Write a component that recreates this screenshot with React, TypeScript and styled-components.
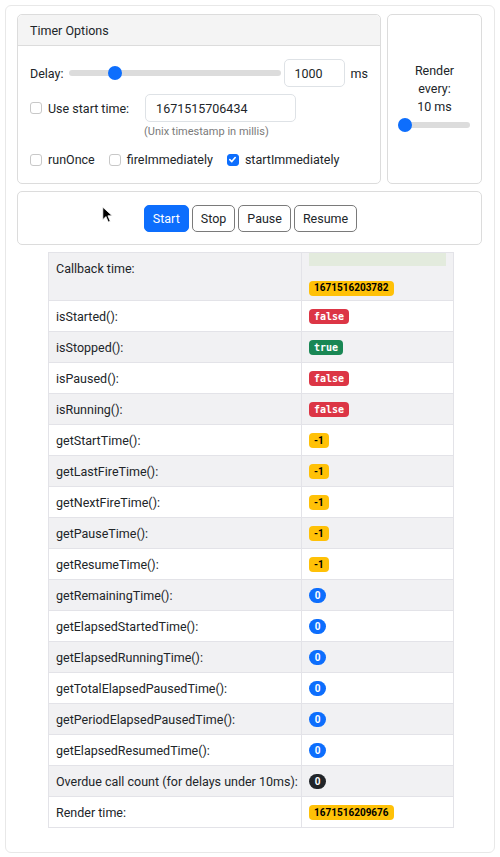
import React from "react";
import styled, { createGlobalStyle } from "styled-components";

const Global = createGlobalStyle`
  html, body { margin: 0; padding: 0; background: #fff; }
  body {
    font-family: Roboto, "Liberation Sans", sans-serif;
    font-size: 12.5px;
    color: #212529;
  }
  * { box-sizing: border-box; }
`;

const Page = styled.div`
  position: relative;
  width: 500px;
  height: 857px;
  padding: 5px 5px 4px 5px;
`;

const Outer = styled.div`
  border: 1px solid #e8e8e8;
  border-radius: 6px;
  padding: 8px 12px 22px 11px;
  display: flex;
  flex-direction: column;
  gap: 7px;
  height: 848px;
`;

const TopRow = styled.div`
  display: flex;
  gap: 6px;
`;

const Card = styled.div`
  border: 1px solid #dcdcdc;
  border-radius: 5px;
  background: #fff;
`;

const OptionsCard = styled(Card)`
  width: 364px;
  height: 170px;
  display: flex;
  flex-direction: column;
`;

const CardHeader = styled.div`
  height: 31px;
  background: #f4f4f4;
  border-bottom: 1px solid #dcdcdc;
  border-radius: 5px 5px 0 0;
  padding: 0 12px;
  display: flex;
  align-items: center;
`;

const CardBody = styled.div`
  padding: 13px 12px 0 12px;
  display: flex;
  flex-direction: column;
`;

const Row = styled.div<{ $mt?: number }>`
  display: flex;
  align-items: center;
  margin-top: ${(p) => p.$mt ?? 0}px;
`;

const Label = styled.span<{ $ml?: number }>`
  margin-left: ${(p) => p.$ml ?? 0}px;
  white-space: nowrap;
`;

const Range = styled.input.attrs({ type: "range" })<{ $w: number }>`
  -webkit-appearance: none;
  appearance: none;
  width: ${(p) => p.$w}px;
  height: 14px;
  margin: 0;
  background: transparent;
  &::-webkit-slider-runnable-track {
    height: 6px;
    background: #dcdcdc;
    border-radius: 3px;
  }
  &::-webkit-slider-thumb {
    -webkit-appearance: none;
    width: 14px;
    height: 14px;
    border-radius: 50%;
    background: #0d6efd;
    margin-top: -4px;
    border: none;
  }
`;

const TextInput = styled.input<{ $w: number }>`
  width: ${(p) => p.$w}px;
  height: 28px;
  border: 1px solid #dee2e6;
  border-radius: 5px;
  padding: 0 10px;
  font-family: inherit;
  font-size: 12.5px;
  color: #212529;
  background: #fff;
  outline: none;
`;

const Box = styled.span<{ $on?: boolean }>`
  width: 12px;
  height: 12px;
  border-radius: 3px;
  border: 1px solid ${(p) => (p.$on ? "#0d6efd" : "#c8c8c8")};
  background: ${(p) => (p.$on ? "#0d6efd" : "#fff")};
  display: inline-flex;
  align-items: center;
  justify-content: center;
  flex: none;
`;

const Check = styled.label<{ $ml?: number }>`
  display: inline-flex;
  align-items: center;
  gap: 6px;
  margin-left: ${(p) => p.$ml ?? 0}px;
`;

const Hint = styled.div`
  font-size: 11px;
  color: #7a7a7a;
  margin: 3px 0 0 114px;
`;

const RenderCard = styled(Card)`
  width: 96px;
  height: 170px;
  display: flex;
  flex-direction: column;
  align-items: center;
  padding-top: 47px;
  line-height: 18px;
  text-align: center;
`;

const RenderSlider = styled.div`
  margin-top: 2px;
`;

const ButtonCard = styled(Card)`
  height: 54px;
  display: flex;
  align-items: center;
  justify-content: center;
  gap: 3px;
  padding-left: 2px;
`;

const Button = styled.button<{ $primary?: boolean }>`
  height: 27px;
  padding: 0 8px;
  border-radius: 5px;
  font-family: inherit;
  font-size: 12.5px;
  border: 1px solid ${(p) => (p.$primary ? "#0d6efd" : "#7a7a7a")};
  background: ${(p) => (p.$primary ? "#0d6efd" : "#fff")};
  color: ${(p) => (p.$primary ? "#fff" : "#212529")};
`;

const Table = styled.table`
  margin-left: 31px;
  width: 406px;
  border-collapse: collapse;
  table-layout: fixed;
  font-size: 12.5px;
`;

const Tr = styled.tr<{ $striped?: boolean }>`
  background: ${(p) => (p.$striped ? "#f1f1f3" : "#fff")};
`;

const Td = styled.td<{ $top?: boolean }>`
  border: 1px solid #e3e3e8;
  height: 31px;
  padding: 0 7px;
  vertical-align: ${(p) => (p.$top ? "top" : "middle")};
  white-space: nowrap;
`;

const CallbackLabel = styled.div`
  padding-top: 8px;
  height: 47px;
`;

const CallbackValue = styled.div`
  display: flex;
  flex-direction: column;
  gap: 13px;
  height: 47px;
`;

const Flash = styled.div`
  height: 13px;
  width: 100%;
  background: #e3ebdd;
`;

type Tone = "danger" | "success" | "warning" | "primary" | "dark";

const toneBg: Record<Tone, string> = {
  danger: "#dc3545",
  success: "#198754",
  warning: "#ffc107",
  primary: "#0d6efd",
  dark: "#212529",
};

const Badge = styled.span<{ $tone: Tone; $mono?: boolean; $pill?: boolean }>`
  display: inline-flex;
  align-items: center;
  justify-content: center;
  height: 15px;
  min-width: ${(p) => (p.$pill ? 17 : 0)}px;
  padding: 0 5px;
  border-radius: ${(p) => (p.$pill ? "8px" : "4px")};
  background: ${(p) => toneBg[p.$tone]};
  color: ${(p) => (p.$tone === "warning" ? "#000" : "#fff")};
  font-weight: 700;
  font-size: 10px;
  font-family: ${(p) =>
    p.$mono
      ? '"DejaVu Sans Mono", "Liberation Mono", monospace'
      : 'Roboto, "Liberation Sans", sans-serif'};
  line-height: 1;
`;

const Cursor = styled.svg`
  position: absolute;
  left: 102px;
  top: 206px;
`;

const CheckMark = () => (
  <svg width="9" height="9" viewBox="0 0 10 10">
    <path d="M2 5.2 L4.2 7.3 L8 2.8" stroke="#fff" strokeWidth="1.8" fill="none" strokeLinecap="round" strokeLinejoin="round" />
  </svg>
);

type RowData = { label: string; value: string; tone: Tone; mono?: boolean; pill?: boolean };

const rows: RowData[] = [
  { label: "isStarted():", value: "false", tone: "danger", mono: true },
  { label: "isStopped():", value: "true", tone: "success", mono: true },
  { label: "isPaused():", value: "false", tone: "danger", mono: true },
  { label: "isRunning():", value: "false", tone: "danger", mono: true },
  { label: "getStartTime():", value: "-1", tone: "warning" },
  { label: "getLastFireTime():", value: "-1", tone: "warning" },
  { label: "getNextFireTime():", value: "-1", tone: "warning" },
  { label: "getPauseTime():", value: "-1", tone: "warning" },
  { label: "getResumeTime():", value: "-1", tone: "warning" },
  { label: "getRemainingTime():", value: "0", tone: "primary", pill: true },
  { label: "getElapsedStartedTime():", value: "0", tone: "primary", pill: true },
  { label: "getElapsedRunningTime():", value: "0", tone: "primary", pill: true },
  { label: "getTotalElapsedPausedTime():", value: "0", tone: "primary", pill: true },
  { label: "getPeriodElapsedPausedTime():", value: "0", tone: "primary", pill: true },
  { label: "getElapsedResumedTime():", value: "0", tone: "primary", pill: true },
  { label: "Overdue call count (for delays under 10ms):", value: "0", tone: "dark", pill: true },
  { label: "Render time:", value: "1671516209676", tone: "warning" },
];

export default function App() {
  return (
    <Page>
      <Global />
      <Outer>
        <TopRow>
          <OptionsCard>
            <CardHeader>Timer Options</CardHeader>
            <CardBody>
              <Row>
                <Label>Delay:</Label>
                <Range $w={212} min={0} max={5000} defaultValue={1000} style={{ marginLeft: 5 }} />
                <TextInput $w={61} defaultValue="1000" style={{ marginLeft: 3 }} />
                <Label $ml={6}>ms</Label>
              </Row>
              <Row $mt={7}>
                <Check>
                  <Box />
                  <span>Use start time:</span>
                </Check>
                <TextInput $w={151} defaultValue="1671515706434" style={{ marginLeft: 16 }} />
              </Row>
              <Hint>(Unix timestamp in millis)</Hint>
              <Row $mt={14}>
                <Check>
                  <Box />
                  <span>runOnce</span>
                </Check>
                <Check $ml={14}>
                  <Box />
                  <span>fireImmediately</span>
                </Check>
                <Check $ml={14}>
                  <Box $on>
                    <CheckMark />
                  </Box>
                  <span>startImmediately</span>
                </Check>
              </Row>
            </CardBody>
          </OptionsCard>
          <RenderCard>
            <div>Render</div>
            <div>every:</div>
            <div>10 ms</div>
            <RenderSlider>
              <Range $w={72} min={10} max={1000} defaultValue={10} />
            </RenderSlider>
          </RenderCard>
        </TopRow>
        <ButtonCard>
          <Button $primary>Start</Button>
          <Button>Stop</Button>
          <Button>Pause</Button>
          <Button>Resume</Button>
        </ButtonCard>
        <Table>
          <colgroup>
            <col style={{ width: 253 }} />
            <col />
          </colgroup>
          <tbody>
            <Tr $striped>
              <Td $top>
                <CallbackLabel>Callback time:</CallbackLabel>
              </Td>
              <Td $top>
                <CallbackValue>
                  <Flash />
                  <div>
                    <Badge $tone="warning">1671516203782</Badge>
                  </div>
                </CallbackValue>
              </Td>
            </Tr>
            {rows.map((r, i) => (
              <Tr key={r.label} $striped={i % 2 === 1}>
                <Td>{r.label}</Td>
                <Td>
                  <Badge $tone={r.tone} $mono={r.mono} $pill={r.pill}>
                    {r.value}
                  </Badge>
                </Td>
              </Tr>
            ))}
          </tbody>
        </Table>
      </Outer>
      <Cursor width="11" height="18" viewBox="0 0 14 22">
        <path d="M1 1 L1 17 L5 13 L8 20 L10.5 19 L7.5 12 L13 12 Z" fill="#000" stroke="#fff" strokeWidth="1" />
      </Cursor>
    </Page>
  );
}
